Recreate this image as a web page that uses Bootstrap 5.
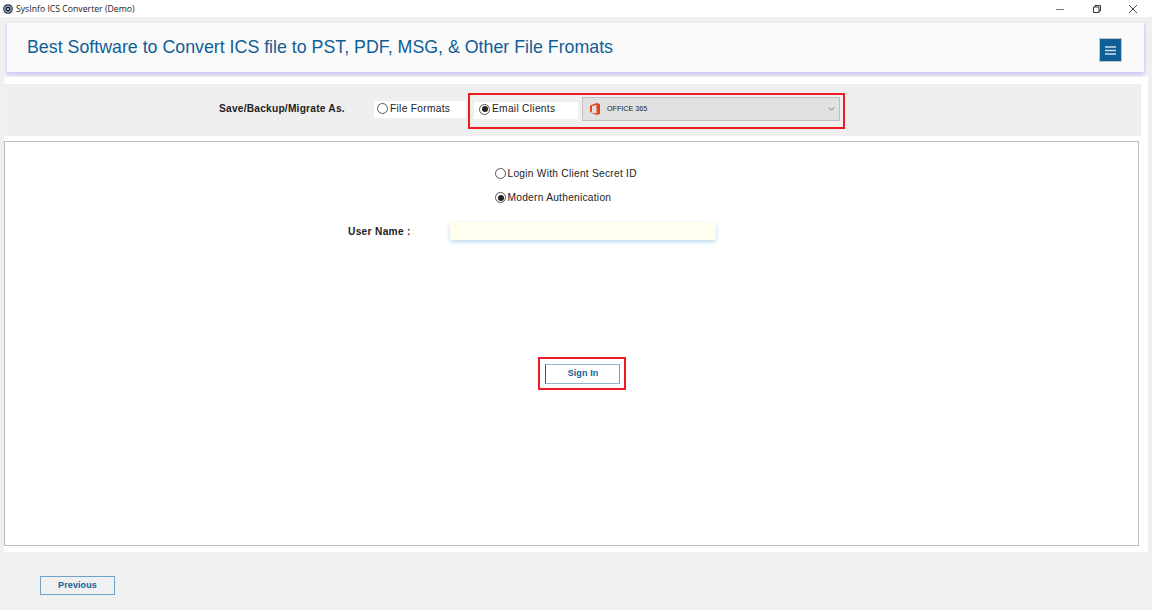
<!DOCTYPE html>
<html lang="en">
<head>
<meta charset="utf-8">
<title>SysInfo ICS Converter (Demo)</title>
<link rel="stylesheet" href="https://cdn.jsdelivr.net/npm/bootstrap@5.3.0/dist/css/bootstrap.min.css">
<style>
html,body{height:100%;margin:0}
body{width:1152px;height:610px;overflow:hidden;background:#f0f0f0;font-family:"Liberation Sans",Arial,sans-serif;color:#111}
.win-bar{height:17px;background:#fff;padding-left:3px}
.win-title{font-family:"Open Sans","Noto Sans",sans-serif;font-size:8.7px;line-height:17px;color:#222;margin:1px 0 0 3px}
.win-ctrl{width:36px;height:17px;display:flex;align-items:center;justify-content:center}
.win-ctrls{margin-right:1px}
.hdr-wrap{padding:6px 8px 0 7px}
.hdr-card{height:49px;background:#fafafa;box-shadow:0 3px 3px #cfcdf5,-1px 0 2px #dcdcf5,2px 0 2px #dcdcf5;padding:0 22px 0 20px}
.hdr-title{font-size:17.8px;color:#0f5e96;margin:0;font-weight:400;line-height:47px}
.menu-btn{width:23px;height:24px;background:#0f5e96;border:1px solid #c4c4c4;padding:0;display:flex;align-items:center;justify-content:center;border-radius:0;margin-top:5px}
.main-panel{margin:5px 4px 0 4px;height:475px;background:#fff;padding-top:7px}
.opt-row{height:52px;width:1137px;background:#efefef}
.opt-label{font-size:10.2px;font-weight:700;letter-spacing:.22px;color:#222;margin:-3px 0 0 215px;width:155px;white-space:nowrap}
.opt-radio{background:#fff;height:17px;display:flex;align-items:center;font-size:10.2px;letter-spacing:.3px;color:#222;margin-top:-1px;padding-bottom:2px}
.radio-dot{width:11px;height:11px;border-radius:50%;border:1px solid #555;background:#fff;display:inline-block;margin-right:1.5px;flex:none;position:relative}
.radio-dot.is-on::after{content:"";position:absolute;inset:1.5px;border-radius:50%;background:#222}
.opt-radio .radio-dot{margin-right:2px}
.file-radio{width:92px;padding-left:3px}
.mail-radio{width:104px;padding-left:5px}
.red-box{border:2px solid #ed1c24}
.red-group{width:377px;height:36px;margin:1px 0 0 2px;padding-left:4px;gap:4px}
.sel-box{width:258px;height:24px;background:#e1e1e1;border:1px solid #c0c0c0;padding:0 4px 0 7px;font-size:7.2px;color:#222;margin-top:-3px}
.sel-name{margin-left:7px}
.form-box{width:1135px;height:405px;margin-top:5px;border:1px solid #bcbcbc;background:#fff}
.auth-radios{padding-left:490px;padding-top:23px;font-size:10.2px;letter-spacing:.26px;color:#222}
.auth-item{height:17px;display:flex;align-items:center;margin-bottom:7px}
.user-row{margin-top:16px;height:18px}
.user-label{font-size:10.2px;font-weight:700;letter-spacing:.3px;color:#222;margin:2px 0 0 343px;width:102px;white-space:nowrap}
.user-input{width:266px;height:18px;background:#fffeef;border:0;border-radius:3px;box-shadow:0 2px 4px #b8d8f0}
.sign-box{width:88px;height:33px;margin:117px 0 0 533px}
.act-btn{border:1px solid #6ea2c8;background:#fff;color:#0f5e96;font-weight:700;font-size:9px;letter-spacing:.1px;padding:0;border-radius:0;line-height:1}
.sign-btn{width:75px;height:20px;padding-left:2px;border-left-color:#0f5e96;border-top-color:#8fb6d3;border-bottom-color:#8fb6d3}
.foot{padding:24px 0 0 40px}
.prev-btn{width:75px;height:19px;background:#f0f0f0;display:block}
</style>
</head>
<body>
<div class="win-bar d-flex align-items-center">
  <svg width="10" height="10" viewBox="0 0 10 10"><circle cx="5" cy="5" r="4.8" fill="#1d2b3f"/><path d="M5 1.600 8 3.300v3.400L5 8.400 2 6.700V3.300z" fill="none" stroke="#cfd6df" stroke-width="1"/><circle cx="5" cy="5" r="1.100" fill="#cfd6df"/></svg>
  <span class="win-title">SysInfo ICS Converter (Demo)</span>
  <div class="win-ctrls d-flex ms-auto">
    <div class="win-ctrl"><svg width="10" height="10" viewBox="0 0 10 10"><path d="M0 5.500h8" stroke="#777" stroke-width="1"/></svg></div>
    <div class="win-ctrl"><svg width="10" height="10" viewBox="0 0 10 10"><path d="M1.500 3h5.500v5.500H1.500zM3 3V1.500h5.500V7H7" fill="none" stroke="#333" stroke-width="1"/></svg></div>
    <div class="win-ctrl"><svg width="10" height="10" viewBox="0 0 10 10"><path d="M1 1l8 8M9 1l-8 8" stroke="#333" stroke-width=".9"/></svg></div>
  </div>
</div>
<div class="hdr-wrap">
  <div class="hdr-card d-flex align-items-center justify-content-between">
    <h1 class="hdr-title">Best Software to Convert ICS file to PST, PDF, MSG, &amp; Other File Fromats</h1>
    <button class="menu-btn" type="button" aria-label="Menu">
      <svg width="11" height="9" viewBox="0 0 11 9"><path d="M0 1h11M0 4.500h11M0 8h11" stroke="#cfe0ee" stroke-width="1.600"/></svg>
    </button>
  </div>
</div>
<div class="main-panel">
  <div class="opt-row d-flex align-items-center">
    <span class="opt-label">Save/Backup/Migrate As.</span>
    <label class="opt-radio file-radio"><span class="radio-dot"></span>File Formats</label>
    <div class="red-box red-group d-flex align-items-center">
      <label class="opt-radio mail-radio"><span class="radio-dot is-on"></span>Email Clients</label>
      <div class="sel-box d-flex align-items-center">
        <svg width="10" height="12" viewBox="0 0 10 12"><path d="M0 2.500 6.500 0 10 1v10l-3.500 1L0 9.500l6.500 1V2L2 3v5.500L0 9.500z" fill="#e2471c"/></svg>
        <span class="sel-name">OFFICE 365</span>
        <svg class="ms-auto" width="7" height="4" viewBox="0 0 8 5"><path d="M.5.500 4 4 7.500.500" fill="none" stroke="#666" stroke-width="1"/></svg>
      </div>
    </div>
  </div>
  <div class="form-box">
    <div class="auth-radios">
      <label class="auth-item"><span class="radio-dot"></span>Login With Client Secret ID</label>
      <label class="auth-item"><span class="radio-dot is-on"></span>Modern Authenication</label>
    </div>
    <div class="user-row d-flex align-items-center">
      <span class="user-label">User Name :</span>
      <input class="user-input" type="text" aria-label="User Name">
    </div>
    <div class="sign-box red-box d-flex align-items-center justify-content-center">
      <button class="act-btn sign-btn" type="button">Sign In</button>
    </div>
  </div>
</div>
<div class="foot">
  <button class="act-btn prev-btn" type="button">Previous</button>
</div>
</body>
</html>
